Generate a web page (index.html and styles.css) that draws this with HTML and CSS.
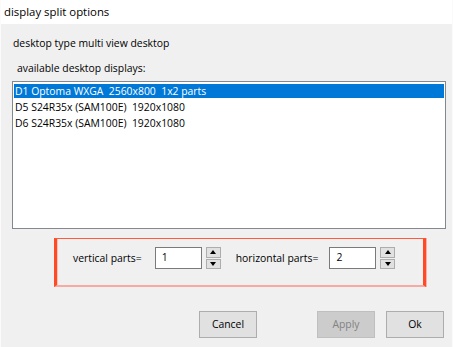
FILE: index.html
```html
<!DOCTYPE html>
<html>
<head>
<meta charset="utf-8">
<link rel="stylesheet" href="styles.css">
</head>
<body>
<div class="window">
  <div class="titlebar">display split options</div>
  <div class="content">
    <div class="label type-label">desktop type multi view desktop</div>
    <div class="label avail-label">available desktop displays:</div>
    <div class="listbox">
      <div class="item selected">D1 Optoma WXGA&nbsp; 2560x800&nbsp; 1x2 parts</div>
      <div class="item">D5 S24R35x (SAM100E)&nbsp; 1920x1080</div>
      <div class="item">D6 S24R35x (SAM100E)&nbsp; 1920x1080</div>
    </div>
    <div class="parts">
      <span class="plabel">vertical parts=</span>
      <div class="field">1</div>
      <div class="spin">
        <div class="sbtn"><span class="up"></span></div>
        <div class="sbtn"><span class="down"></span></div>
      </div>
      <span class="plabel hlabel">horizontal parts=</span>
      <div class="field">2</div>
      <div class="spin">
        <div class="sbtn"><span class="up"></span></div>
        <div class="sbtn"><span class="down"></span></div>
      </div>
    </div>
    <div class="buttons">
      <div class="btn cancel">Cancel</div>
      <div class="btn disabled">Apply</div>
      <div class="btn">Ok</div>
    </div>
  </div>
</div>
</body>
</html>
```
FILE: styles.css
```css
html, body {
  margin: 0;
  padding: 0;
}
body {
  width: 453px;
  height: 347px;
  overflow: hidden;
  background: #f0f0f0;
  font-family: "Open Sans", "Noto Sans", sans-serif;
  font-size: 10.4px;
  color: #000;
}
.window {
  width: 453px;
  height: 347px;
  box-sizing: border-box;
  border-left: 1px solid #fbfbfb;
  border-right: 1px solid #fbfbfb;
}
.titlebar {
  height: 24px;
  line-height: 23px;
  background: #fff;
  padding-left: 3px;
  font-size: 11.4px;
}
.content {
  display: flex;
  flex-direction: column;
  align-items: flex-start;
}
.label {
  line-height: 16px;
  height: 16px;
}
.type-label {
  margin-top: 11px;
  margin-left: 12px;
}
.avail-label {
  margin-top: 9px;
  margin-left: 16px;
}
.listbox {
  margin-top: 5px;
  margin-left: 11px;
  width: 434px;
  height: 148px;
  box-sizing: border-box;
  border: 1px solid #828790;
  background: #fff;
  padding: 2px 1px 1px 1px;
}
.item {
  height: 16px;
  line-height: 15px;
  padding-left: 1px;
  white-space: pre;
}
.item.selected {
  color: #fff;
  background: linear-gradient(#0078d7 0 14px, transparent 14px);
}
.parts {
  margin-top: 9px;
  margin-left: 53px;
  width: 372px;
  height: 49px;
  box-sizing: border-box;
  border-left: 3px solid #ff4a26;
  border-top: 1px solid #ff5a3c;
  border-right: 3px solid #ff4a26;
  border-bottom: 2px solid #f8aaa2;
  box-shadow: 1px 0 0 #f9b0a8, inset 1px 0 0 #fbc4bc;
  padding: 8px 0 0 16px;
  display: flex;
  align-items: flex-start;
}
.plabel {
  line-height: 22px;
  margin-right: 13px;
}
.hlabel {
  margin-left: 15px;
  margin-right: 11px;
}
.field {
  width: 47px;
  height: 22px;
  box-sizing: border-box;
  border: 1px solid #7a7a7a;
  background: #fff;
  padding-left: 6px;
  line-height: 18px;
}
.spin {
  margin-left: 4px;
  display: flex;
  flex-direction: column;
  gap: 1px;
}
.sbtn {
  width: 15px;
  height: 10.5px;
  box-sizing: border-box;
  border: 1px solid #adadad;
  background: #e1e1e1;
  display: flex;
  align-items: center;
  justify-content: center;
}
.up, .down {
  width: 0;
  height: 0;
  border-left: 3.5px solid transparent;
  border-right: 3.5px solid transparent;
}
.up {
  border-bottom: 4px solid #000;
}
.down {
  border-top: 4px solid #000;
}
.buttons {
  margin-top: 24px;
  margin-left: 198px;
  display: flex;
  gap: 11px;
}
.btn {
  width: 58px;
  height: 27px;
  box-sizing: border-box;
  border: 1px solid #adadad;
  background: #e1e1e1;
  text-align: center;
  line-height: 24px;
}
.btn.cancel {
  margin-right: 49px;
}
.btn.disabled {
  background: #cccccc;
  border-color: #bfbfbf;
  color: #838383;
}
```
